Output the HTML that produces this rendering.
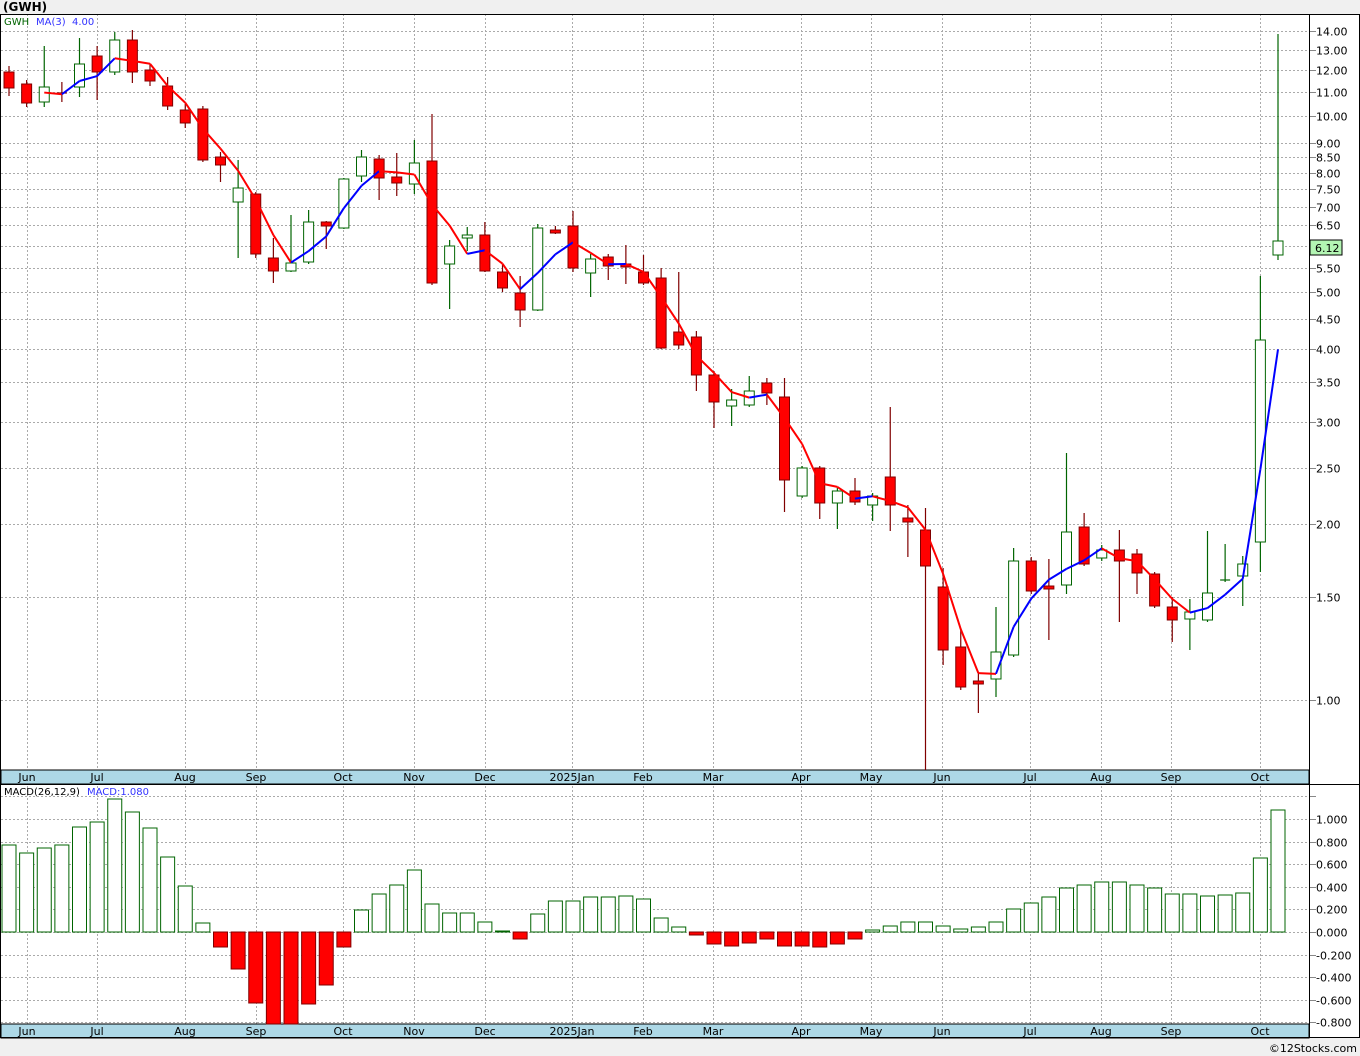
<!DOCTYPE html>
<html><head><meta charset="utf-8"><style>
html,body{margin:0;padding:0;background:#f0f0f0;width:1360px;height:1056px;overflow:hidden;font-family:"DejaVu Sans","Liberation Sans",sans-serif}
svg{position:absolute;left:0;top:0}
</style></head><body>
<svg id="s" width="1360" height="1056" xmlns="http://www.w3.org/2000/svg" font-family="DejaVu Sans, Liberation Sans, sans-serif" font-size="11"></svg>
<script>
const C=[[72,88,66,96,'r'],[84,103,80,107,'r'],[87,102,46,107,'g'],[93,93,82,102,'d'],[64,87,38,97,'g'],[56,72,46,100,'r'],[40,72,32,75,'g'],[40,72,30,83,'r'],[70,81,64,86,'r'],[86,106,77,110,'r'],[110,123,104,128,'r'],[109,160,106,162,'r'],[157,165,152,182,'r'],[188,202,160,258,'g'],[194,254,192,258,'r'],[258,271,238,283,'r'],[263,271,215,272,'g'],[222,262,210,264,'g'],[222,226,221,249,'r'],[179,228,178,229,'g'],[157,176,150,182,'g'],[159,178,155,200,'r'],[177,183,153,196,'r'],[163,184,140,194,'g'],[161,283,114,285,'r'],[246,264,240,309,'g'],[235,238,227,251,'g'],[235,271,222,272,'r'],[272,288,264,292,'r'],[293,310,276,327,'r'],[228,310,224,311,'g'],[230,233,226,234,'r'],[226,268,211,272,'r'],[259,273,254,297,'g'],[257,266,254,280,'r'],[264,267,245,284,'r'],[272,283,255,285,'r'],[278,348,268,349,'r'],[332,345,272,349,'r'],[337,375,331,391,'r'],[375,402,371,428,'r'],[400,406,389,426,'g'],[391,405,376,407,'g'],[383,393,378,405,'r'],[397,480,378,512,'r'],[468,496,466,498,'g'],[468,503,466,519,'r'],[491,503,488,529,'g'],[491,502,478,505,'r'],[496,505,493,521,'g'],[477,505,407,531,'r'],[518,522,505,557,'r'],[530,566,508,770,'r'],[587,650,568,665,'r'],[647,687,628,690,'r'],[681,684,672,713,'r'],[652,679,607,697,'g'],[561,655,548,657,'g'],[561,591,557,594,'r'],[586,588,559,640,'r'],[532,585,453,594,'g'],[527,564,513,566,'r'],[550,558,545,561,'g'],[550,561,530,622,'r'],[554,573,549,594,'r'],[574,606,572,608,'r'],[607,620,597,642,'r'],[612,619,599,650,'g'],[593,620,531,622,'g'],[580,580,544,582,'dg'],[564,576,556,606,'g'],[340,542,276,572,'g'],[241,255,34,260,'g']];
const M=[845,853,848,845,827,822,799,812,828,857,886,923,947,969,1003,1024,1024,1004,985,947,910,894,885,870,904,913,913,922,931,939,914,901,901,897,897,896,899,918,927,935,944,946,943,939,946,946,947,944,939,930,926,922,922,926,929,927,922,909,903,897,888,885,882,882,885,888,894,894,896,895,893,858,810];
const X=i=>9+i*17.625;
let h='';
// backgrounds
h+='<rect x="0" y="14" width="1360" height="1024" fill="#fff"/>';
h+='<text x="3" y="11" font-weight="bold" font-size="12">(GWH)</text>';
const py=p=>700-253.5*Math.log(p);
const levels=[14,13,12,11,10,9,8.5,8,7.5,7,6.5,6,5.5,5,4.5,4,3.5,3,2.5,2,1.5,1];
const months=[[27,'Jun'],[97,'Jul'],[185,'Aug'],[256,'Sep'],[343,'Oct'],[414,'Nov'],[485,'Dec'],[572,'2025Jan'],[643,'Feb'],[713,'Mar'],[801,'Apr'],[871,'May'],[942,'Jun'],[1030,'Jul'],[1101,'Aug'],[1171,'Sep'],[1260,'Oct']];
const dot='stroke="#aaa" stroke-dasharray="2,2" stroke-width="1"';
levels.forEach(v=>{const y=Math.round(py(v))+.5;h+=`<line x1="1" x2="1309" y1="${y}" y2="${y}" ${dot}/><line x1="1309" x2="1316" y1="${y}" y2="${y}" stroke="#888"/>`;if(v!=6)h+=`<text x="1316" y="${y+4}" fill="#000">${v.toFixed(2)}</text>`;});
for(let v=1.2;v>=-0.8-1e-9;v-=0.2){const y=Math.round(932-113*v)+.5;h+=`<line x1="1" x2="1309" y1="${y}" y2="${y}" ${dot}/><line x1="1309" x2="1316" y1="${y}" y2="${y}" stroke="#888"/>`;if(v<1.1)h+=`<text x="1316" y="${y+4}">${(Math.abs(v)<1e-9?0:v).toFixed(3)}</text>`;}
months.forEach(m=>{const x=m[0]+.5;h+=`<line x1="${x}" x2="${x}" y1="14" y2="1038" ${dot}/>`;});
// date bars
[770,1024].forEach(y=>{h+=`<rect x="1" y="${y}" width="1308" height="14" fill="#add8e6" stroke="#000"/>`;months.forEach(m=>{h+=`<text x="${m[0]}" y="${y+11}" text-anchor="middle" fill="#000">${m[1]}</text>`;});});
// candles
C.forEach((c,i)=>{const x=X(i);let [t,b,wt,wb,k]=c;const w= k=='r'?'#800000':(k=='d'?'#800000':'#006400');
h+=`<line x1="${x}" x2="${x}" y1="${wt}" y2="${wb}" stroke="${w}" stroke-width="1.2"/>`;
if(k=='d'||k=='dg'){h+=`<line x1="${x-5}" x2="${x+5}" y1="${t}" y2="${t}" stroke="${w}" stroke-width="1.2"/>`;}
else if(k=='r'){h+=`<rect x="${x-5}" y="${t}" width="10" height="${Math.max(b-t,3)}" fill="#f00" stroke="#800000"/>`;}
else h+=`<rect x="${x-5}" y="${t}" width="10" height="${Math.max(b-t,3)}" fill="#fff" stroke="#006400"/>`;});
// MA
const cl=C.map(c=>{const y=c[4]=='r'?c[1]:c[0];return Math.exp((700-y)/253.5);});
let prev=null,pv=null;
for(let i=2;i<C.length;i++){const m=(cl[i]+cl[i-1]+cl[i-2])/3;const y=py(m);if(prev!==null){h+=`<line x1="${X(i-1)}" y1="${prev}" x2="${X(i)}" y2="${y}" stroke="${m>=pv?'#00f':'#f00'}" stroke-width="2"/>`;}prev=y;pv=m;}
// MACD bars
M.forEach((v,i)=>{const x=X(i)-7;if(v<=932)h+=`<rect x="${x}" y="${v}" width="14" height="${932-v}" fill="#fff" stroke="#006400"/>`;else h+=`<rect x="${x}" y="932" width="14" height="${v-932}" fill="#f00" stroke="#800000"/>`;});
// frames
h+='<rect x="0.5" y="14.5" width="1359" height="1023" fill="none" stroke="#000"/>';
h+='<line x1="1309.5" x2="1309.5" y1="14" y2="1038" stroke="#000"/>';
h+='<line x1="0" x2="1360" y1="784.5" y2="784.5" stroke="#000"/>';
h+='<rect x="1310" y="240" width="32" height="15" fill="#b3f5b3" stroke="#000"/><text x="1315" y="252">6.12</text>';
h+='<text x="4" y="25" font-size="10" fill="#006400">GWH</text><text x="36" y="25" font-size="10" fill="#3333ff">MA(3)</text><text x="72" y="25" font-size="10" fill="#3333ff">4.00</text>';
h+='<text x="4" y="795" font-size="10" fill="#000">MACD(26,12,9)</text><text x="87" y="795" font-size="10" fill="#3333ff">MACD:1.080</text>';
h+='<text x="1357" y="1052" text-anchor="end" font-size="11">©12Stocks.com</text>';
document.getElementById('s').innerHTML=h;
</script>
</body></html>
